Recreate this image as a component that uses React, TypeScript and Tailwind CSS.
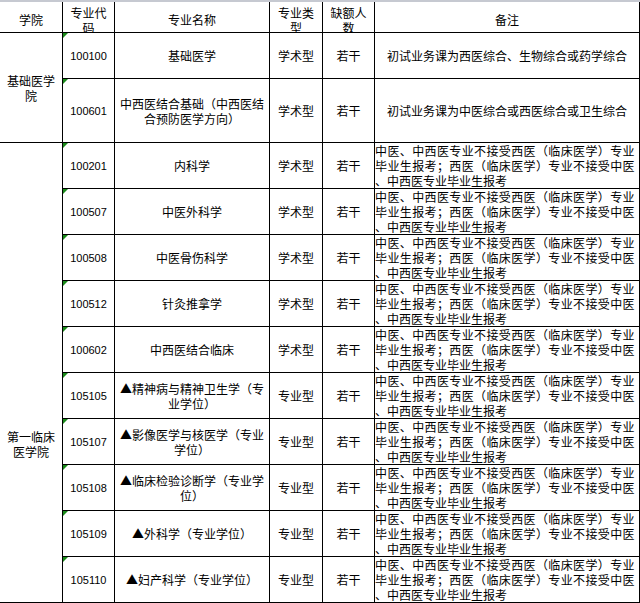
import React from "react";

type Row = {
  code: string;
  name: string[];
  type: string;
  note?: string;
};

const NOTE_LINES = [
  "中医、中西医专业不接受西医（临床医学）专业",
  "毕业生报考；西医（临床医学）专业不接受中医",
  "、中西医专业毕业生报考",
];

const group1: Row[] = [
  { code: "100100", name: ["基础医学"], type: "学术型", note: "初试业务课为西医综合、生物综合或药学综合" },
  { code: "100601", name: ["中西医结合基础（中西医结", "合预防医学方向）"], type: "学术型", note: "初试业务课为中医综合或西医综合或卫生综合" },
];

const group2: Row[] = [
  { code: "100201", name: ["内科学"], type: "学术型" },
  { code: "100507", name: ["中医外科学"], type: "学术型" },
  { code: "100508", name: ["中医骨伤科学"], type: "学术型" },
  { code: "100512", name: ["针灸推拿学"], type: "学术型" },
  { code: "100602", name: ["中西医结合临床"], type: "学术型" },
  { code: "105105", name: ["▲精神病与精神卫生学（专", "业学位）"], type: "专业型" },
  { code: "105107", name: ["▲影像医学与核医学（专业", "学位）"], type: "专业型" },
  { code: "105108", name: ["▲临床检验诊断学（专业学", "位）"], type: "专业型" },
  { code: "105109", name: ["▲外科学（专业学位）"], type: "专业型" },
  { code: "105110", name: ["▲妇产科学（专业学位）"], type: "专业型" },
];

const cell = "bg-white flex items-center justify-center text-center leading-[15px] overflow-hidden";

function Triangle() {
  return (
    <svg className="absolute left-0 top-0" width="5" height="5" viewBox="0 0 5 5">
      <polygon points="0,0 5,0 0,5" fill="#1a8a1a" />
    </svg>
  );
}

function RowCells({ r }: { r: Row }) {
  return (
    <>
      <div className={`${cell} relative pt-[2px] font-['Liberation_Sans',Arial,sans-serif] text-[11px]`}>
        <Triangle />
        {r.code}
      </div>
      <div className={`${cell} flex-col`}>
        {r.name.map((l, i) => (
          <div key={i} className="whitespace-nowrap">{l}</div>
        ))}
      </div>
      <div className={cell}>{r.type}</div>
      <div className={cell}>若干</div>
      {r.note ? (
        <div className={cell}>
          <span className="whitespace-nowrap">{r.note}</span>
        </div>
      ) : (
        <div className="bg-white leading-[15px] overflow-hidden text-left">
          <div className="whitespace-nowrap tracking-[0.38px]">{NOTE_LINES[0]}</div>
          <div className="whitespace-nowrap tracking-[0.38px]">{NOTE_LINES[1]}</div>
          <div className="whitespace-nowrap">{NOTE_LINES[2]}</div>
        </div>
      )}
    </>
  );
}

export default function App() {
  const head = "bg-white flex flex-col items-center text-center leading-[15px] overflow-hidden";
  return (
    <div className="w-[640px] h-[603px] bg-white border-t-2 border-[#c6c9d1] font-['Noto_Sans_CJK_SC','Noto_Sans_CJK_JP',sans-serif] text-[12px] text-black">
      <div className="grid grid-cols-[62px_51px_154px_52px_51px_264px] grid-rows-[30px_45px_63px_repeat(10,45px)] gap-px bg-black pr-px pb-px">
        <div className={`${head} pt-[10px]`}>学院</div>
        <div className={`${head} pt-[3px]`}>
          <div>专业代</div>
          <div>码</div>
        </div>
        <div className={`${head} pt-[10px]`}>专业名称</div>
        <div className={`${head} pt-[3px]`}>
          <div>专业类</div>
          <div>型</div>
        </div>
        <div className={`${head} pt-[3px]`}>
          <div>缺额人</div>
          <div>数</div>
        </div>
        <div className={`${head} pt-[10px]`}>备注</div>

        <div className={`${cell} row-span-2 flex-col`}>
          <div>基础医学</div>
          <div>院</div>
        </div>
        {group1.map((r) => (
          <RowCells key={r.code} r={r} />
        ))}

        <div className="row-span-10 bg-white flex flex-col items-center text-center leading-[15px] pt-[286px] overflow-hidden">
          <div>第一临床</div>
          <div>医学院</div>
        </div>
        {group2.map((r) => (
          <RowCells key={r.code} r={r} />
        ))}
      </div>
    </div>
  );
}
